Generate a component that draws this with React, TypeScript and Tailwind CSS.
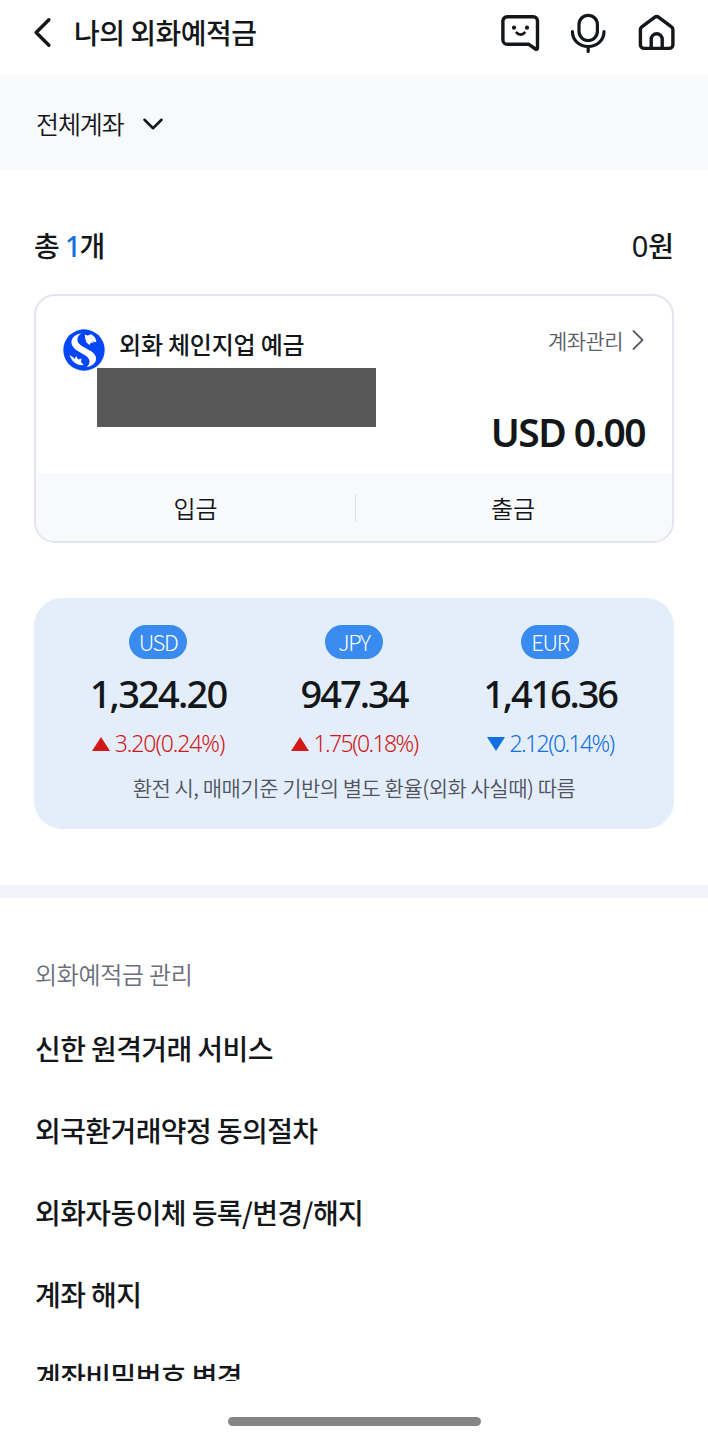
import { ChevronDown, ChevronLeft, ChevronRight } from 'lucide-react'
import clsx from 'clsx'

interface Rate {
  code: string
  price: string
  change: string
  up: boolean
  priceClass: string
  changeClass: string
}

const rates: Rate[] = [
  { code: 'USD', price: '1,324.20', change: '3.20(0.24%)', up: true, priceClass: 'tracking-[-1.8px]', changeClass: 'tracking-[-1.1px]' },
  { code: 'JPY', price: '947.34', change: '1.75(0.18%)', up: true, priceClass: 'tracking-[-2px]', changeClass: 'tracking-[-1.6px]' },
  { code: 'EUR', price: '1,416.36', change: '2.12(0.14%)', up: false, priceClass: 'tracking-[-2.2px]', changeClass: 'tracking-[-1.6px]' },
]

const menus = [
  '신한 원격거래 서비스',
  '외국환거래약정 동의절차',
  '외화자동이체 등록/변경/해지',
  '계좌 해지',
  '계좌비밀번호 변경',
]

function ChatIcon() {
  return (
    <svg width="40" height="40" viewBox="0 0 40 40" fill="none" stroke="currentColor" strokeWidth="3.4" strokeLinecap="round" strokeLinejoin="round">
      <path d="M6.2 4.7h26a4.3 4.3 0 0 1 4.3 4.3V36.1c0 1.2-1 1.6-2 .9L27.5 32.2H6.2a4.3 4.3 0 0 1-4.3-4.3V9a4.3 4.3 0 0 1 4.3-4.3Z" />
      <path d="M15.7 20.800c1.5 2.300 6.300 2.300 7.800 0" strokeWidth="2.800" />
      <circle cx="13" cy="15.700" r="2.100" fill="currentColor" stroke="none" />
      <circle cx="26" cy="15.700" r="2.100" fill="currentColor" stroke="none" />
    </svg>
  )
}

function MicIcon() {
  return (
    <svg width="40" height="41" viewBox="0 0 40 41" fill="none" stroke="currentColor" strokeWidth="3.2" strokeLinecap="round">
      <rect x="10" y="3.300" width="18.400" height="25.200" rx="9.200" />
      <path d="M3.400 19.500c0 8.500 6.600 15 15.800 15s15.800-6.500 15.800-15M19.200 35v4.500" />
    </svg>
  )
}

function HomeIcon() {
  return (
    <svg width="40" height="40" viewBox="0 0 40 40" fill="none" stroke="currentColor" strokeWidth="3.4" strokeLinejoin="round" strokeLinecap="round">
      <path d="M4.800 14.800 17.500 5.400a3.600 3.600 0 0 1 4.300 0l12.700 9.400a3.600 3.600 0 0 1 1.400 2.800V32.700a3.700 3.700 0 0 1-3.700 3.700H7.100a3.700 3.700 0 0 1-3.700-3.700V17.600a3.600 3.600 0 0 1 1.400-2.800Z" />
      <path d="M14.200 36V27.300a5.500 5.500 0 0 1 11 0V36" />
    </svg>
  )
}

function BankLogo() {
  return (
    <svg width="42" height="42" viewBox="0 0 42 42">
      <circle cx="21" cy="21" r="20.700" fill="#0547f5" />
      <path
        fill="#fff"
        d="M18.500 4.500C10 5.500 6.500 11.500 9.500 17C13 23.500 25.500 25.500 26.500 31.500C26.900 34.500 25.500 36.500 23.500 38C31 37 34.500 32 32.500 27C29.500 20 16 18.500 14.500 12C13.900 8.800 15.500 6 18.500 4.500Z"
      />
      <path fill="#fff" d="M21.800 5.500L24.500 6.500L28.300 5.300L32 8.500L33.500 12.500L32 13.300L29.300 12L30.500 14.200L28 13.600L26.500 16L23.500 13.500L22.200 9.500Z" />
      <path fill="#fff" d="M6.500 26L10.500 28.500L11.800 30L13 27L15.300 30.500L18.500 29.500L18 33L20.800 36C15 37 9 33.500 6.500 26Z" />
    </svg>
  )
}

function RateColumn({ rate }: { rate: Rate }) {
  return (
    <div className="flex w-[196px] flex-col items-center font-['Noto_Sans',sans-serif]">
      <span className="flex h-[34px] w-[58px] items-center justify-center rounded-full bg-[#398bef] pb-[3px] font-['Noto_Sans_CJK_KR',sans-serif] text-[22px] leading-[30px] font-light tracking-[-1.4px] text-white">
        {rate.code}
      </span>
      <span className={clsx('mt-[8px] h-[53px] text-[38px] leading-[53px] font-medium whitespace-nowrap', rate.priceClass)}>{rate.price}</span>
      <div className={clsx('mt-[6px] flex h-[34px] items-center gap-[5px] whitespace-nowrap', rate.up ? 'text-[#d21818]' : 'text-[#1070e0]')}>
        <svg width="18" height="14" viewBox="0 0 18 14" fill="currentColor" className="mt-[2px]">
          {rate.up ? <path d="M9 0 18 14H0Z" /> : <path d="M0 0h18L9 14Z" />}
        </svg>
        <span className={clsx('text-[23px] leading-[34px] font-light', rate.changeClass)}>{rate.change}</span>
      </div>
    </div>
  )
}

export default function App() {
  return (
    <div className="flex h-[1440px] w-[708px] flex-col overflow-hidden bg-white font-['Noto_Sans_CJK_KR',sans-serif] text-[#14171a]">
      {/* 헤더 */}
      <header className="flex h-[75px] shrink-0 items-start pr-[31px] pl-[17px]">
        <ChevronLeft className="mt-[7px] h-[51px] w-[51px]" strokeWidth={1.6} />
        <h1 className="ml-[6px] flex-1 pt-[11px] text-[28px] leading-[42px] font-medium tracking-[-0.5px]">나의 외화예적금</h1>
        <div className="flex gap-[28px] pt-[12px]">
          <ChatIcon />
          <MicIcon />
          <HomeIcon />
        </div>
      </header>

      {/* 계좌 필터 */}
      <div className="flex h-[95px] shrink-0 items-center bg-[#f8f9fb] pt-[3px] pl-[36px]">
        <span className="text-[25px] font-[350] tracking-[-1.1px]">전체계좌</span>
        <ChevronDown className="ml-[12px] h-[34px] w-[34px]" strokeWidth={1.8} />
      </div>

      <main className="flex h-[1211px] shrink-0 flex-col overflow-hidden">
        <section className="px-[34px] pt-[54px]">
          <div className="flex h-[42px] items-center justify-between pt-px text-[28px] font-medium">
            <span className="tracking-[-0.5px]">
              총 <span className="font-['Noto_Sans',sans-serif] tracking-[-1.5px] text-[#1070e0]">1</span>개
            </span>
            <span>
              <span className="font-['Noto_Sans',sans-serif] text-[29px] font-normal">0</span>원
            </span>
          </div>

          {/* 계좌 카드 */}
          <div className="mt-[28px] flex h-[249px] flex-col overflow-hidden rounded-[21px] border-2 border-[#e3e4ef]">
            <div className="flex h-[177px] justify-between px-[27px]">
              <div className="flex pt-[33px]">
                <BankLogo />
                <div className="relative ml-[14px]">
                  <h2 className="-mt-[2px] text-[24px] leading-[34px] font-medium tracking-[-0.2px]">외화 체인지업 예금</h2>
                  {/* 계좌번호 가림 */}
                  <div className="absolute top-[39px] left-[-22px] h-[59px] w-[279px] bg-[#585858]" />
                </div>
              </div>
              <div className="flex flex-col items-end pt-[26px]">
                <div className="flex items-center text-[#5b5e66]">
                  <span className="text-[21px] leading-[34px] font-[350] tracking-[-0.6px]">계좌관리</span>
                  <ChevronRight className="mr-[-11px] ml-[-3px] h-[36px] w-[36px]" strokeWidth={1.2} />
                </div>
                <strong className="mt-[45px] font-['Noto_Sans',sans-serif] text-[39px] leading-[58px] font-semibold tracking-[-1.6px]">USD 0.00</strong>
              </div>
            </div>
            <div className="flex flex-1 items-center bg-[#f8f9fb] pt-[2px] text-[24px] font-[350]">
              <button className="w-[319px] text-center">입금</button>
              <span className="h-[28px] w-px bg-[#dcdfe6]" />
              <button className="w-[314px] text-center">출금</button>
            </div>
          </div>

          {/* 환율 */}
          <div className="mt-[55px] flex h-[231px] flex-col items-center rounded-[28px] bg-[#e4eefb] pt-[27px]">
            <div className="flex">
              {rates.map((rate) => (
                <RateColumn key={rate.code} rate={rate} />
              ))}
            </div>
            <p className="mt-[11px] text-[21px] leading-[32px] font-[350] tracking-[-0.5px] text-[#4f545e]">
              환전 시, 매매기준 기반의 별도 환율(외화 사실때) 따름
            </p>
          </div>
        </section>

        <div className="mt-[56px] h-[13px] shrink-0 bg-[#f3f4fa]" />

        {/* 관리 메뉴 */}
        <section className="px-[35px] pt-[59px]">
          <h3 className="text-[24px] leading-[34px] font-[350] tracking-[-0.3px] text-[#6b6f7b]">외화예적금 관리</h3>
          <ul className="mt-[16px]">
            {menus.map((menu) => (
              <li key={menu} className="flex h-[82px] items-center text-[28px] font-medium tracking-[-0.6px]">
                {menu}
              </li>
            ))}
          </ul>
        </section>
      </main>

      <div className="mt-[36px] h-[9px] w-[253px] shrink-0 self-center rounded-full bg-[#858585]" />
    </div>
  )
}
